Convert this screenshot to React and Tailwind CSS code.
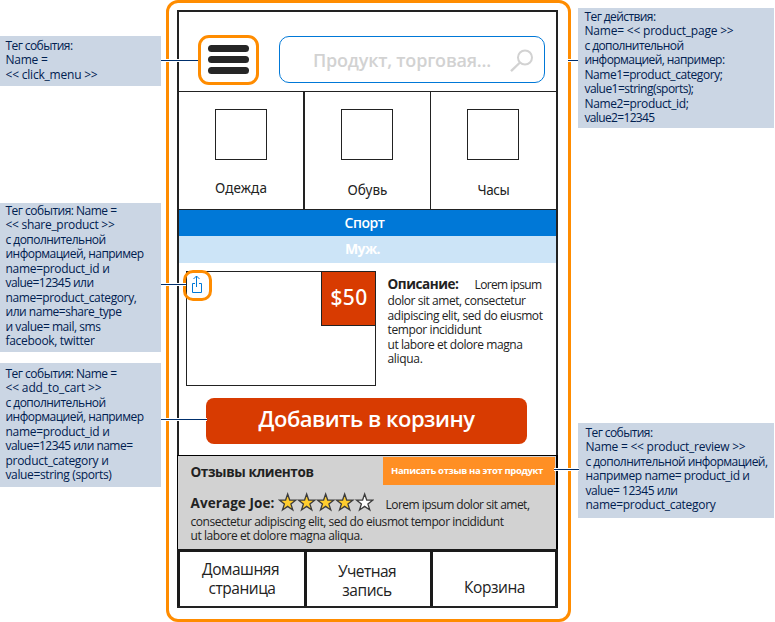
import { useLayoutEffect, useRef, useState } from "react";
import clsx from "clsx";

const FONT = "font-['Open_Sans','Noto_Sans',sans-serif]";

// One line of text whose tracking is adjusted so that it fills `w` pixels.
function Fit({ w, className, children }) {
  const ref = useRef(null);
  const [spacing, setSpacing] = useState(0);
  useLayoutEffect(() => {
    const natural = ref.current.getBoundingClientRect().width;
    setSpacing((w + 1 - natural) / children.length);
  }, [w, children]);
  return (
    <span
      ref={ref}
      className={clsx("inline-block whitespace-pre", className)}
      style={{ letterSpacing: `${spacing}px` }}
    >
      {children}
    </span>
  );
}

function Note({ lines, className }) {
  return (
    <div className={clsx("bg-[#cbd6e4] text-[12px] leading-[14.45px] text-[#002050]", className)}>
      {lines.map(([text, w]) => (
        <div key={text} className="flex">
          <Fit w={w}>{text}</Fit>
        </div>
      ))}
    </div>
  );
}

const MENU_NOTE = [
  ["Тег события:", 66],
  ["Name =", 41],
  ["<< click_menu >>", 91],
];
const SHARE_NOTE = [
  ["Тег события: Name =", 110],
  ["<< share_product >>", 108],
  ["с дополнительной", 99],
  ["информацией, например", 137],
  ["name=product_id и", 103],
  ["value=12345 или", 87],
  ["name=product_category,", 130],
  ["или name=share_type", 115],
  ["и value= mail, sms", 94],
  ["facebook, twitter", 88],
];
const CART_NOTE = [
  ["Тег события: Name =", 110],
  ["<< add_to_cart >>", 95],
  ["с дополнительной", 99],
  ["информацией, например", 137],
  ["name=product_id и", 103],
  ["value=12345 или name=", 126],
  ["product_category и", 102],
  ["value=string (sports)", 105],
];
const PAGE_NOTE = [
  ["Тег действия:", 70],
  ["Name= << product_page >>", 148],
  ["с дополнительной", 98],
  ["информацией, например:", 139],
  ["Name1=product_category;", 137],
  ["value1=string(sports);", 108],
  ["Name2=product_id;", 103],
  ["value2=12345", 69],
];
const REVIEW_NOTE = [
  ["Тег события:", 66],
  ["Name = << product_review >>", 159],
  ["с дополнительной информацией,", 181],
  ["например name= product_id и", 163],
  ["value= 12345 или", 91],
  ["name=product_category", 129],
];

function Connector({ className }) {
  return <div className={clsx("absolute h-[3px] border-y border-white bg-[#002f6c]", className)} />;
}

function Star({ filled }) {
  return (
    <svg width="19.3" height="20" viewBox="0 0 19.3 20">
      <path
        d="M9.65 2 L11.7 8 L17.9 8.1 L12.9 11.9 L14.8 18 L9.65 14.4 L4.5 18 L6.4 11.9 L1.4 8.1 L7.6 8 Z"
        fill={filled ? "#ffcd2e" : "#ffffff"}
        stroke="#3c3c3c"
        strokeWidth="1.3"
      />
    </svg>
  );
}

function Header() {
  return (
    <div className="flex h-20 items-start border-b border-[#222] pl-[19px] pt-[23px]">
      <div className="flex h-[50px] w-[61px] flex-col gap-1 rounded-[11px] border-[3px] border-[#ff8c00] px-[7px] pt-[7px]">
        <div className="h-[7px] rounded-full bg-[#262626]" />
        <div className="h-[7px] rounded-full bg-[#262626]" />
        <div className="h-[7px] rounded-full bg-[#262626]" />
      </div>
      <div className="ml-5 mt-px flex h-[47px] w-[266px] rounded-[10px] border border-[#0078d7] pl-[33px]">
        <Fit w={177} className="text-[18px] font-semibold leading-[46px] text-[#d2d2d2]">
          Продукт, торговая...
        </Fit>
        <svg className="ml-[18px] mt-[11px]" width="26" height="26" viewBox="0 0 26 26" fill="none" stroke="#d2d2d2" strokeWidth="2">
          <circle cx="16" cy="9.5" r="7" />
          <path d="M11 14.5 L2 23.2" strokeWidth="2.3" />
        </svg>
      </div>
    </div>
  );
}

function Category({ label, w, className }) {
  return (
    <div className={clsx("flex flex-col pt-[17px]", className)}>
      <div className="ml-9 h-[51px] w-[52px] border border-[#222]" />
      <div className="flex justify-center font-['Noto_Sans',sans-serif] text-[13.5px] leading-5 text-[#222]">
        <Fit w={w}>{label}</Fit>
      </div>
    </div>
  );
}

function Product() {
  return (
    <div className="flex h-[192px] flex-col pl-[7px] pt-2">
      <div className="flex">
        <div className="relative flex h-[115px] w-[190px] shrink-0 justify-end border border-[#222]">
          <div className="-mr-px -mt-px flex h-[55px] w-[55px] justify-center border border-[#222] bg-[#d83b01] pl-px font-['Noto_Sans',sans-serif] text-[21px] font-medium leading-[50px] text-white">
            <Fit w={36}>$50</Fit>
          </div>
          <div className="absolute -left-1 -top-0.5 flex h-[31px] w-[29px] justify-center rounded-[10px] border-[3px] border-[#ff8c00] pr-px pt-0.5">
            <svg width="12" height="19" viewBox="0 0 12 19" fill="none" stroke="#0078d7" strokeWidth="1">
              <path d="M4 8.5 H1.5 V17.5 H10.5 V8.5 H8" />
              <path d="M5.5 12 V1" />
              <path d="M2.5 4 L5.5 1 L8.5 4" />
            </svg>
          </div>
        </div>
        <div className="ml-[11.5px] pt-1 text-[12px] leading-[14.6px] text-[#222]">
          <div className="flex h-[19px] leading-[19px]">
            <Fit w={70} className="text-[13.5px] font-bold">Описание:</Fit>
            <Fit w={66} className="ml-4">Lorem ipsum</Fit>
          </div>
          <div className="flex"><Fit w={137}>dolor sit amet, consectetur</Fit></div>
          <div className="flex"><Fit w={154}>adipiscing elit, sed do eiusmot</Fit></div>
          <div className="flex"><Fit w={93}>tempor incididunt</Fit></div>
          <div className="flex"><Fit w={134}>ut labore et dolore magna</Fit></div>
          <div className="flex"><Fit w={34}>aliqua.</Fit></div>
        </div>
      </div>
      <div className="ml-5 mt-3 flex h-[46px] w-[321px] shrink-0 justify-center rounded-lg bg-[#d83b01] text-[22px] font-semibold leading-[41px] text-white">
        <Fit w={215}>Добавить в корзину</Fit>
      </div>
    </div>
  );
}

function Reviews() {
  return (
    <div className="-mx-0.5 h-[94px] border border-b-0 border-r-2 border-black bg-[#d2d2d2] text-[#222]">
      <div className="flex h-[30px] items-start justify-between pl-[12.5px] pt-px">
        <Fit w={122} className="mt-[5px] text-[13.5px] font-bold leading-5">Отзывы клиентов</Fit>
        <div className="mr-px flex h-7 w-[172px] justify-center bg-[#ff8f24] pr-1 text-[9.5px] font-bold leading-[27px] text-white">
          <Fit w={151}>Написать отзыв на этот продукт</Fit>
        </div>
      </div>
      <div className="mt-1.5 flex h-[23px] pl-[12.5px]">
        <Fit w={83} className="mt-px text-[13.5px] font-bold leading-5">Average Joe:</Fit>
        <div className="ml-[3px] flex">
          <Star filled />
          <Star filled />
          <Star filled />
          <Star filled />
          <Star />
        </div>
        <Fit w={143} className="ml-[11.5px] mt-[3px] text-[12px] leading-5">Lorem ipsum dolor sit amet,</Fit>
      </div>
      <div className="flex pl-[12.5px] text-[12px] leading-[14px]"><Fit w={312}>consectetur adipiscing elit, sed do eiusmot tempor incididunt</Fit></div>
      <div className="flex pl-[12.5px] text-[12px] leading-[14px]"><Fit w={171}>ut labore et dolore magna aliqua.</Fit></div>
    </div>
  );
}

function BottomNav() {
  return (
    <div className="-mx-0.5 flex h-[57px] border-x-[3px] border-t-[3px] border-[#1a1a1a] text-[15.5px] leading-[19px] text-[#222]">
      <div className="flex w-[127px] flex-col items-center border-r-[3px] border-[#1a1a1a] pt-2">
        <Fit w={76} className="-ml-[3px]">Домашняя</Fit>
        <Fit w={66}>страница</Fit>
      </div>
      <div className="flex w-[126px] flex-col items-center border-r-[3px] border-[#1a1a1a] pr-[3px] pt-[10px]">
        <Fit w={57}>Учетная</Fit>
        <Fit w={48.5}>запись</Fit>
      </div>
      <div className="flex flex-1 flex-col items-center pl-px pt-[26px]">
        <Fit w={60}>Корзина</Fit>
      </div>
    </div>
  );
}

export default function App() {
  return (
    <div className={clsx("relative flex h-[622px] w-[775px] overflow-hidden bg-white", FONT)}>
      <div className="flex w-[161px] flex-col pt-9">
        <Note lines={MENU_NOTE} className="h-[50px] pl-[5.5px] pt-[3px]" />
        <Note lines={SHARE_NOTE} className="mt-[117px] h-[149px] pl-[5.5px] pt-px" />
        <Note lines={CART_NOTE} className="mt-[11px] h-[124px] pl-[5.5px] pt-1" />
      </div>
      <div className="ml-[5px] h-[622px] w-[405px] rounded-[12px] border-[3px] border-[#ff8c00] pl-2 pt-[7px]">
        <div className="h-[598px] w-[381px] border-2 border-[#222]">
          <Header />
          <div className="flex h-[118px] border-b border-[#222]">
            <Category label="Одежда" w={51} className="w-[126px] gap-[18px] border-r-2 border-[#222]" />
            <Category label="Обувь" w={39} className="w-[126px] gap-5 border-r border-[#222]" />
            <Category label="Часы" w={31} className="w-[125px] gap-5" />
          </div>
          <div className="flex h-[26px] justify-center bg-[#0078d7] pr-1.5 text-[14px] font-semibold leading-[25px] text-white">
            <Fit w={39}>Спорт</Fit>
          </div>
          <div className="flex h-[27px] justify-center bg-[#cce4f7] pr-2.5 text-[14px] font-bold leading-[26px] text-white">
            <Fit w={34}>Муж.</Fit>
          </div>
          <Product />
          <Reviews />
          <BottomNav />
        </div>
      </div>
      <div className="ml-[7px] flex w-[196px] flex-col pt-2">
        <Note lines={PAGE_NOTE} className="h-[120px] pl-[6.5px] pt-0.5" />
        <Note lines={REVIEW_NOTE} className="mt-[295px] h-[95px] pl-[7.5px] pt-[3px]" />
      </div>
      <Connector className="left-[161px] top-[59px] w-[37px]" />
      <Connector className="left-[161px] top-[283px] w-[25px]" />
      <Connector className="left-[161px] top-[418px] w-[46px]" />
      <Connector className="left-[568px] top-[59px] w-[10px]" />
      <Connector className="left-[554px] top-[468px] w-[25px]" />
    </div>
  );
}
